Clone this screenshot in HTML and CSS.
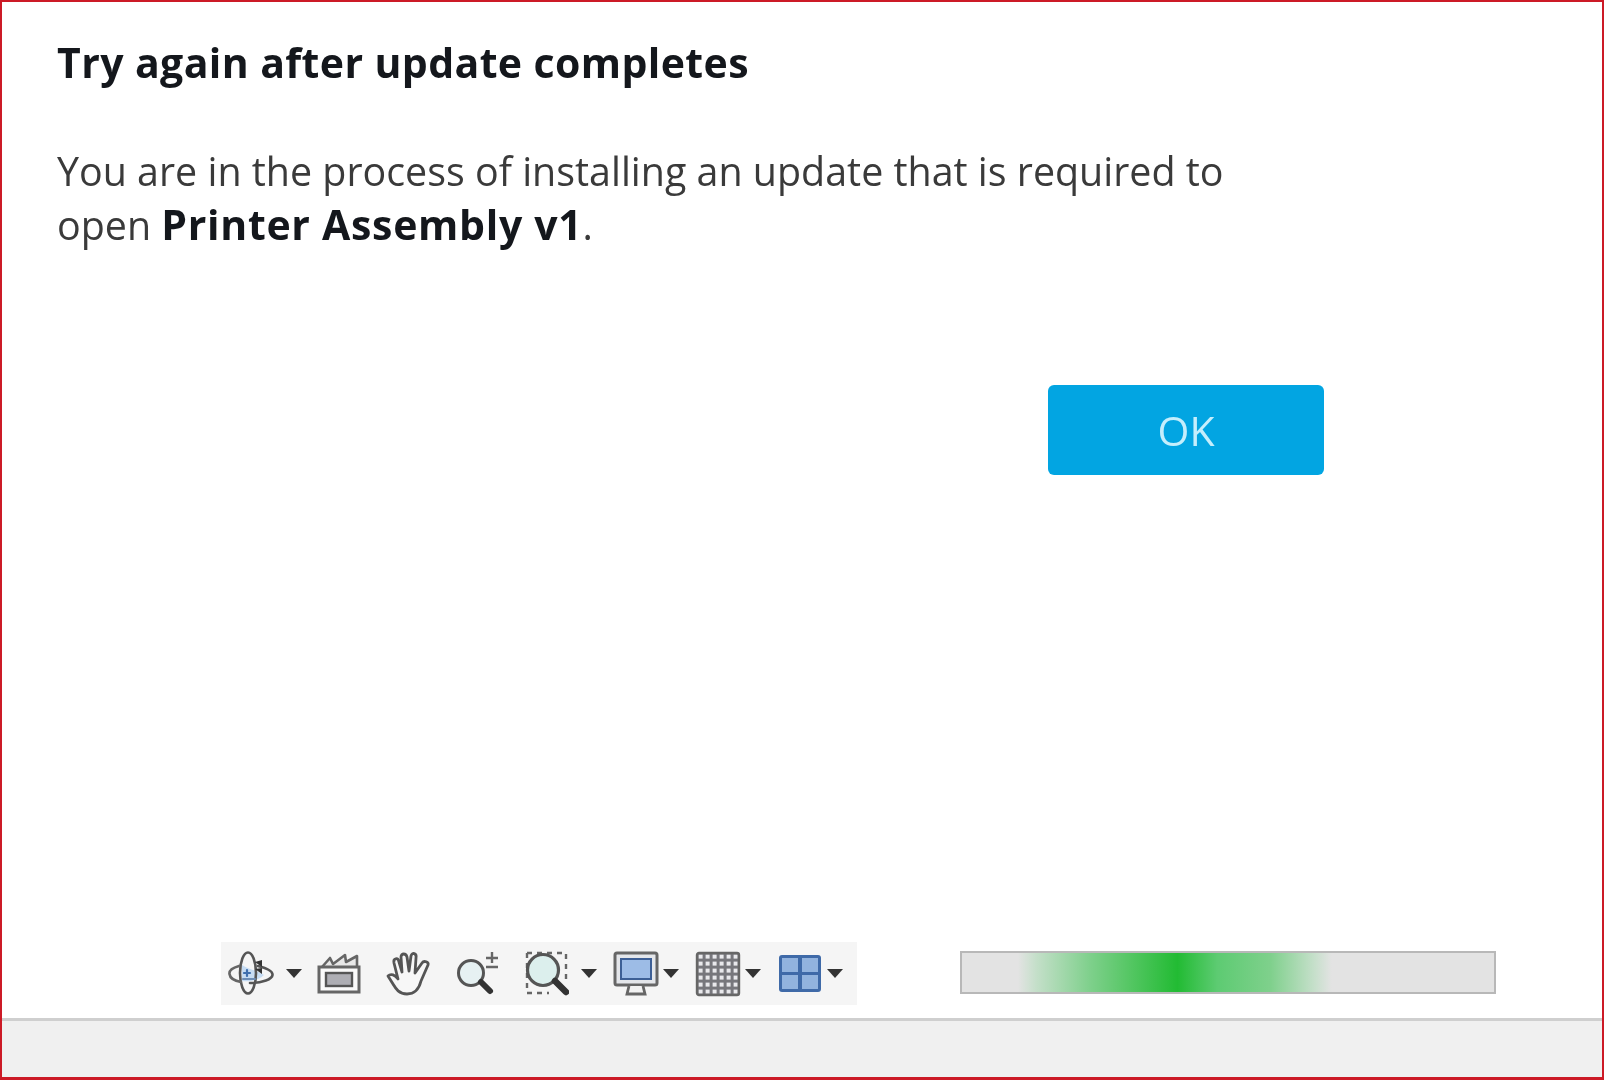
FILE: index.html
```html
<!doctype html>

<html>
    <head>
        <meta charset="utf-8">
        <title>Try again after update completes</title>
        <link rel="stylesheet" href="styles.css">
    </head>
    <body>
        <div class="frame">
            <!-- Message -->
            <div class="dialog">
                <h1 class="dialog-title">Try again after update completes</h1>
                <p class="dialog-text">You are in the process of installing an update that is required to<br>open <b>Printer Assembly v1</b>.</p>
                <div class="dialog-actions">
                    <button class="ok-button">OK</button>
                </div>
            </div>

            <!-- Navigation bar and progress -->
            <div class="status-row">
                <div class="toolbar">
                    <div class="tool wide">
                        <svg class="icon" viewBox="0 0 46 46" fill="none" stroke-linecap="round" stroke-linejoin="round">
                            <path d="M14 14 C20 18 30 20 36 24 C30 30 20 31 14 30 Z" fill="#c6dcf3" stroke="none"/>
                            <ellipse cx="20" cy="22" rx="8" ry="20.5" stroke="#555" stroke-width="2.6"/>
                            <path d="M11 15 C4 17 1 20 1.5 23 C2 27 7 30 13 31" stroke="#666" stroke-width="2.6"/>
                            <path d="M30 15 C38 17 45 20 44.5 24 C44 28 35 32 22 32" stroke="#555" stroke-width="2.6"/>
                            <path d="M27 11 l7 -2 v7 z M27 18 l7 -1 v6 z" fill="#333" stroke="none"/>
                            <path d="M16 22 h6 M19 19 v6" stroke="#3f6fae" stroke-width="2.2"/>
                            <path d="M15 28 h12" stroke="#6d8db5" stroke-width="2"/>
                        </svg>
                        <span class="caret"></span>
                    </div>
                    <div class="tool">
                        <svg class="icon" viewBox="0 0 46 46" fill="none">
                            <path d="M6 16 L14 7 L17 13 L29 4 L30 11 L41 5 V16" fill="#e8e8e8" stroke="#666" stroke-width="2.6" stroke-linejoin="round"/>
                            <rect x="3" y="16" width="40" height="25" fill="#fafafa" stroke="#666" stroke-width="3"/>
                            <rect x="10" y="22" width="26" height="13" fill="#aeaeb4" stroke="#555" stroke-width="2.4"/>
                        </svg>
                    </div>
                    <div class="tool spaced">
                        <svg class="icon" viewBox="0 0 46 46" fill="#f7f7f7" stroke="#555" stroke-width="2.8" stroke-linejoin="round" stroke-linecap="round">
                            <path d="M3 25 C6 22 10 24 13 28 L9 12 C8 7 13 6 14 11 L17 21 L16 6 C16 2 21 2 22 6 L24 20 L26 5 C27 1 32 2 31 7 L30 22 L37 12 C39 9 44 11 43 14 L36 30 C34 38 29 43 22 43 C14 43 11 38 8 33 Z"/>
                        </svg>
                    </div>
                    <div class="tool spaced">
                        <svg class="icon" viewBox="0 0 46 46" fill="none" stroke-linecap="round">
                            <circle cx="17" cy="22" r="12.5" fill="#e6f1f2" stroke="#555" stroke-width="3"/>
                            <path d="M27 31 L36 40" stroke="#333" stroke-width="6"/>
                            <path d="M38 1 v11 M32 7 h12 M32 16 h12" stroke="#666" stroke-width="2.4" stroke-linecap="butt"/>
                        </svg>
                    </div>
                    <div class="tool wide spaced">
                        <svg class="icon" viewBox="0 0 46 46" fill="none">
                            <path d="M4 2 H43 V30 M4 2 V42 H26" stroke="#666" stroke-width="2.4" stroke-dasharray="5 5"/>
                            <circle cx="20" cy="19" r="15.5" fill="#dcefed" stroke="#555" stroke-width="3.2"/>
                            <path d="M32 30 L43 41" stroke="#333" stroke-width="6.5" stroke-linecap="round"/>
                        </svg>
                        <span class="caret"></span>
                    </div>
                    <div class="tool nudged">
                        <svg class="icon" viewBox="0 0 46 46" fill="none">
                            <rect x="2" y="2" width="42" height="32" rx="2" fill="#e4e6ea" stroke="#666" stroke-width="3"/>
                            <rect x="8" y="8" width="30" height="20" fill="#9dbce6" stroke="#3d5f95" stroke-width="2"/>
                            <path d="M16 35 L14 43 H32 L30 35" fill="#f2f2f2" stroke="#666" stroke-width="2.8"/>
                        </svg>
                        <span class="caret"></span>
                    </div>
                    <div class="tool nudged">
                        <svg class="icon" viewBox="0 0 46 46">
                            <defs>
                                <pattern id="grid-cell" width="7" height="7" patternUnits="userSpaceOnUse" x="2" y="2">
                                    <rect width="7" height="7" fill="#77777c"/>
                                    <rect x="1.6" y="1.6" width="4" height="4" fill="#e9e9ec"/>
                                </pattern>
                            </defs>
                            <rect x="2" y="2" width="42" height="42" rx="2" fill="url(#grid-cell)" stroke="#666" stroke-width="2.4"/>
                        </svg>
                        <span class="caret"></span>
                    </div>
                    <div class="tool nudged">
                        <svg class="icon" viewBox="0 0 46 46">
                            <rect x="2" y="4" width="42" height="37" rx="3" fill="#3f6aa8"/>
                            <rect x="5" y="7" width="16" height="14" fill="#92b3de"/>
                            <rect x="25" y="7" width="16" height="14" fill="#92b3de"/>
                            <rect x="5" y="24" width="16" height="14" fill="#92b3de"/>
                            <rect x="25" y="24" width="16" height="14" fill="#92b3de"/>
                        </svg>
                        <span class="caret"></span>
                    </div>
                </div>
                <div class="progress"></div>
            </div>

            <div class="footer"></div>
        </div>
    </body>
</html>
```

FILE: styles.css
```css
html, body {
    margin: 0;
    height: 100%;
    background: #fff;
}
/* the capture is a soft upscale, so everything gets a slight blur */
.frame {
    display: flex;
    flex-direction: column;
    box-sizing: border-box;
    height: 1080px;
    border: 2px solid #cc1a26;
    border-bottom-width: 3px;
    font-family: "Open Sans", sans-serif;
    filter: blur(0.6px);
}
.dialog {
    flex: 1;
    padding: 0 55px;
}
.dialog-title {
    margin: 33px 0 0;
    font-size: 41px;
    line-height: 54px;
    font-weight: 700;
    letter-spacing: 0.4px;
    color: #14171c;
}
.dialog-text {
    margin: 55px 0 0;
    font-size: 39.4px;
    line-height: 54px;
    color: #3a3a3a;
}
.dialog-text b {
    font-size: 41px;
    line-height: 1;
    font-weight: 700;
    letter-spacing: 0.7px;
    color: #14171c;
}
.dialog-actions {
    margin-top: 133px;
    width: 1267px;
    display: flex;
    justify-content: flex-end;
}
.ok-button {
    width: 276px;
    height: 90px;
    border: 0;
    border-radius: 6px;
    background: #02a5e2;
    color: #c5eefc;
    font-family: inherit;
    font-size: 41px;
}
.status-row {
    display: flex;
    align-items: center;
    padding-left: 219px;
    height: 63px;
    margin-bottom: 13px;
}
.toolbar {
    display: flex;
    align-items: center;
    gap: 13px;
    box-sizing: border-box;
    width: 636px;
    height: 63px;
    padding-left: 7px;
    background: #f5f5f5;
}
.tool {
    display: flex;
    align-items: center;
    gap: 3px;
}
.tool.wide { gap: 11px; }
.tool.spaced { margin-left: 10px; }
.tool.nudged { margin-left: 2px; }
.icon {
    display: block;
    width: 46px;
    height: 46px;
}
.caret {
    width: 0;
    height: 0;
    margin: 0 1px;
    border: 8px solid transparent;
    border-top: 9px solid #333;
    border-bottom: 0;
}
.progress {
    box-sizing: border-box;
    width: 536px;
    height: 43px;
    margin-left: 103px;
    margin-bottom: 3px;
    border: 2px solid #b8b8b8;
    background: linear-gradient(90deg, #e3e3e3 10.5%, #c4dfc9 14%, #7fd08c 24%, #22bb33 40.5%, #5dcb72 48%, #7fd08c 58%, #c4dfc9 66%, #e3e3e3 69.5%);
}
.footer {
    height: 59px;
    border-top: 3px solid #cfcfcf;
    background: #f0f0f0;
    box-sizing: border-box;
}
```
